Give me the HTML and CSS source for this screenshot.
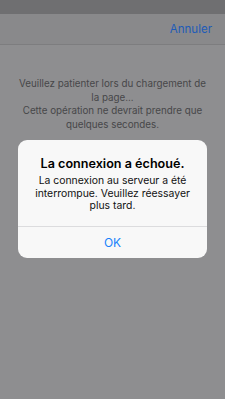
FILE: index.html
```html
<!DOCTYPE html>
<html lang="fr">
<head>
<meta charset="utf-8">
<link rel="stylesheet" href="styles.css">
</head>
<body>
<div class="screen">
  <div class="status"></div>
  <div class="nav"><span class="cancel">Annuler</span></div>
  <div class="content">
    <p class="wait">Veuillez patienter lors du chargement de la page...<br>Cette opération ne devrait prendre que quelques secondes.</p>
  </div>
  <div class="alert">
    <div class="alert-body">
      <div class="alert-title">La connexion a échoué.</div>
      <div class="alert-msg">La connexion au serveur a été interrompue. Veuillez réessayer plus tard.</div>
    </div>
    <div class="alert-btn">OK</div>
  </div>
</div>
</body>
</html>
```
FILE: styles.css
```css
html, body {
  margin: 0;
  padding: 0;
}
body {
  width: 225px;
  height: 399px;
  overflow: hidden;
  background: #8e8e90;
  font-family: Inter, "Liberation Sans", Arial, sans-serif;
}
.screen {
  position: relative;
  width: 225px;
  height: 399px;
  display: flex;
  flex-direction: column;
}
.status {
  height: 14px;
  background: #6f6f71;
}
.nav {
  height: 30px;
  background: #89898b;
  border-bottom: 1px solid #7d7d7f;
  display: flex;
  align-items: center;
  justify-content: flex-end;
  padding-right: 13px;
}
.cancel {
  color: #1d5bb8;
  font-size: 11.5px;
}
.content {
  padding: 32px 14px 0;
}
.wait {
  margin: 0;
  text-align: center;
  color: #474749;
  font-size: 9.8px;
  line-height: 13.5px;
}
.alert {
  position: absolute;
  left: 18px;
  top: 140px;
  width: 189px;
  background: #f8f8f8;
  border-radius: 9px;
  overflow: hidden;
}
.alert-body {
  padding: 16px 14px 13px;
  text-align: center;
  border-bottom: 1px solid #dcdcde;
}
.alert-title {
  font-size: 12.6px;
  font-weight: 600;
  color: #000;
  line-height: 16px;
}
.alert-msg {
  margin-top: 3px;
  font-size: 10.4px;
  line-height: 12.5px;
  color: #111;
}
.alert-btn {
  height: 31px;
  display: flex;
  align-items: center;
  justify-content: center;
  color: #1a82fb;
  font-size: 12px;
}
```
